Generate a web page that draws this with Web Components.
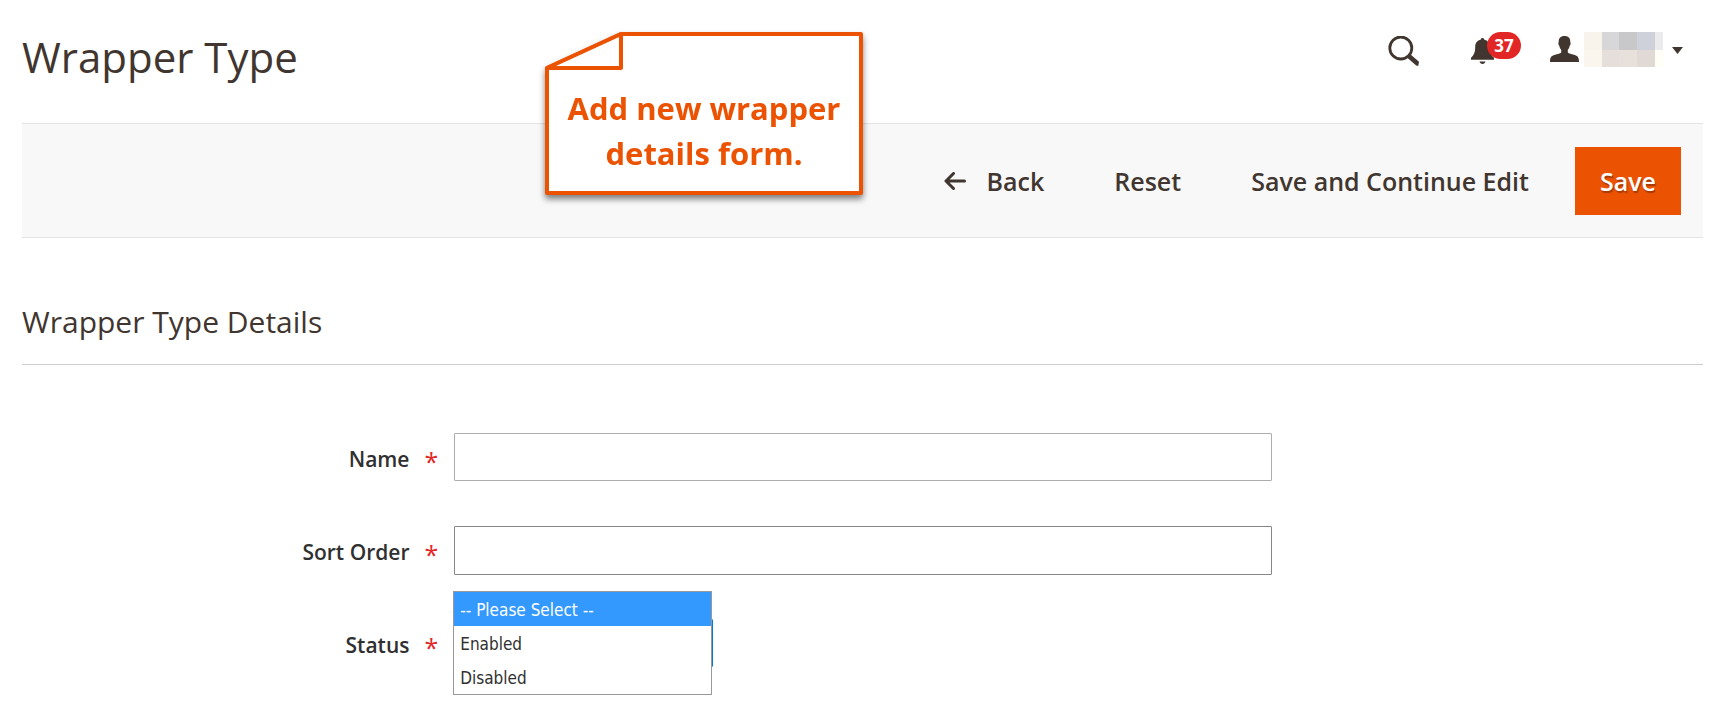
<!DOCTYPE html>
<html lang="en">
<head>
<meta charset="utf-8">
<meta name="viewport" content="width=device-width, initial-scale=1">
<title>Wrapper Type</title>
<style>
  body { margin: 0; background: #fff; color: #41362f; font-family: "Open Sans", "Noto Sans", sans-serif; }
</style>
</head>
<body>
<wrapper-page></wrapper-page>

<template id="page-header">
  <style>
    :host { display: flex; justify-content: space-between; align-items: flex-start; height: 123px; }
    h1 { margin: 29px 0 0; font-size: 42px; line-height: 56px; font-weight: 400; white-space: nowrap; }
  </style>
  <h1><slot></slot></h1>
  <slot name="tools"></slot>
</template>

<template id="header-tools">
  <style>
    :host { display: flex; align-items: flex-start; padding: 32px 20px 0 0; }
    button { display: flex; align-items: flex-start; padding: 0; border: 0; background: none; color: inherit; font: inherit; cursor: pointer; }
    svg { display: block; fill: currentColor; }
    .search { padding-top: 4px; }
    .bell { position: relative; width: 50px; margin: 0 29px 0 52px; padding-top: 6px; }
    .count { position: absolute; top: 0; right: 0; width: 34px; height: 27px; border-radius: 14px; background: #e22626; color: #fff; font-size: 17px; line-height: 27px; font-weight: 700; text-align: center; }
    .person { margin: 4px 5px 0 0; }
    .caret { margin: 15px 0 0 9px; }
  </style>
  <button class="search" type="button" aria-label="Search">
    <svg width="31" height="30" viewBox="0 0 31 30"><circle cx="12.8" cy="12" r="11" fill="none" stroke="currentColor" stroke-width="2.800"/><path d="M22.300 18.200 31 25.800 30.200 30 28.200 29.600 19 21.600Z"/></svg>
  </button>
  <button class="bell" type="button" aria-label="Notifications">
    <svg width="23" height="27" viewBox="0 0 23 27"><path d="M11.500 0c.9 0 1.500.6 1.600 1.400 3.600.8 5.700 3.600 5.700 7.300 0 5.600 1.300 8.100 4.200 11.100v2H0v-2c2.900-3 4.200-5.500 4.200-11.100 0-3.700 2.100-6.500 5.700-7.300C10 .6 10.600 0 11.500 0ZM8.500 23.600h6c-.3 1.500-1.500 2.300-3 2.300s-2.700-.8-3-2.300Z"/></svg>
    <span class="count">37</span>
  </button>
  <button type="button" aria-label="Account">
    <svg class="person" width="29" height="26" viewBox="0 0 29 26"><path d="M14.500 0c4.200 0 6 2.400 5.800 6.300.7 1 .3 2.700-.6 3.400-.3 1.900-1 3.200-1.900 4.100v2.600c1 1.200 3.400 1.300 6.200 2.300 3.900 1.300 5 2.500 5 7.300H0c0-4.800 1.100-6 5-7.300 2.800-1 5.200-1.100 6.200-2.300v-2.600c-.9-.9-1.600-2.200-1.900-4.100-.9-.7-1.300-2.400-.6-3.400C8.500 2.400 10.300 0 14.500 0Z"/></svg>
    <svg width="79" height="35" viewBox="0 0 79 35" shape-rendering="crispEdges"><path fill="#f8f3eb" d="M0 0h18v18H0z"/><path fill="#d7d6d9" d="M18 0h17v18H18z"/><path fill="#c8c8ca" d="M35 0h18v18H35z"/><path fill="#cfd1da" d="M53 0h18v18H53z"/><path fill="#ebebee" d="M71 0h8v18h-8z"/><path fill="#faf6ee" d="M0 18h18v17H0z"/><path fill="#e6deda" d="M18 18h17v17H18z"/><path fill="#e7e0db" d="M35 18h18v17H35z"/><path fill="#e1d9d5" d="M53 18h18v17H53z"/><path fill="#fffff8" d="M71 18h8v17h-8z"/></svg>
    <svg class="caret" width="11" height="7" viewBox="0 0 11 7"><path d="M0 0h11L5.500 7Z"/></svg>
  </button>
</template>

<template id="action-bar">
  <style>
    :host { display: flex; justify-content: flex-end; gap: 22px; padding: 23px 22px 22px; border: solid #e3e3e3; border-width: 1px 0; background: #f8f8f8; }
  </style>
  <slot></slot>
</template>

<template id="action-button">
  <style>
    :host { display: block; }
    button { display: flex; align-items: center; gap: 21px; height: 68px; padding: 0 24px; border: 0; background: none; color: inherit; font: 600 25px/34px "Open Sans", "Noto Sans", sans-serif; white-space: nowrap; cursor: pointer; }
    :host([primary]) button { padding: 0 25px; background: #eb5202; color: #fff; text-shadow: 1px 2px 1px rgba(0, 0, 0, .3); }
  </style>
  <button type="button"><slot name="icon"></slot><slot></slot></button>
</template>

<template id="form-section">
  <style>
    :host { display: block; padding-top: 63px; }
    h2 { margin: 0 0 68px; padding-bottom: 22px; border-bottom: 1px solid #ccc; font-size: 30px; line-height: 41px; font-weight: 400; }
    form { display: grid; gap: 41px; }
  </style>
  <h2><slot name="title"></slot></h2>
  <form><slot></slot></form>
</template>

<template id="form-field">
  <style>
    :host { display: grid; grid-template-columns: calc(25% + 12px) calc(50% - 23px); align-items: start; color: #303030; }
    label { display: flex; justify-content: flex-end; gap: 15px; padding-right: 16px; font-size: 21px; line-height: 52px; font-weight: 600; white-space: nowrap; }
    .mark { color: #e22626; font-size: 25px; line-height: 56px; height: 52px; font-weight: 400; }
    .control { position: relative; }
    input, select { display: block; box-sizing: border-box; height: 48px; border: 1px solid #adadad; border-radius: 1px; background: #fff; color: #303030; font: 20px "Open Sans", sans-serif; padding: 0 14px; }
    input { width: 100%; }
    :host([active]) input { border-color: #878787; height: 49px; }
    select { width: 259px; border-color: #007bdb; }
    ul { position: absolute; top: -28px; left: -1px; box-sizing: border-box; width: 259px; margin: 0; padding: 0; border: 1px solid #999; background: #fff; list-style: none; font: 17px/32px "DejaVu Sans Condensed", "Noto Sans", sans-serif; }
    li { padding: 2px 6px 0; }
    [aria-selected=true] { background: #3399ff; color: #fff; }
  </style>
  <label for="control"><span class="text"></span><span class="mark">*</span></label>
  <div class="control"></div>
</template>

<template id="callout-note">
  <style>
    :host { display: grid; width: 318px; height: 164px; color: #eb5202; filter: drop-shadow(0 4px 3px rgba(0, 0, 0, .5)); }
    svg, p { grid-area: 1 / 1; }
    p { margin: 54px 0 0; text-align: center; font-size: 31px; line-height: 45px; font-weight: 700; }
  </style>
  <svg width="318" height="164" viewBox="0 0 318 164" fill="#fff" stroke="#eb5202" stroke-width="4" stroke-linejoin="round"><path d="M2 36 76 2H316V161H2Z"/><path d="M2 36 76 2V36Z"/></svg>
  <p><slot></slot></p>
</template>

<template id="wrapper-page">
  <style>
    :host { display: block; position: relative; padding-bottom: 49px; }
    main, page-header { margin: 0 23px 0 22px; }
    callout-note { position: absolute; top: 32px; right: 50%; }
  </style>
  <page-header>Wrapper Type<header-tools slot="tools"></header-tools></page-header>
  <main>
    <action-bar>
      <action-button><svg slot="icon" width="22" height="18" viewBox="0 0 22 18" fill="none" stroke="currentColor" stroke-width="3" stroke-linecap="round" stroke-linejoin="round"><path d="M20.500 9H2M9.500 1.500 2 9l7.500 7.500"/></svg>Back</action-button>
      <action-button>Reset</action-button>
      <action-button>Save and Continue Edit</action-button>
      <action-button primary>Save</action-button>
    </action-bar>
    <form-section>
      <span slot="title">Wrapper Type Details</span>
      <form-field label="Name"></form-field>
      <form-field label="Sort Order" active></form-field>
      <form-field label="Status" options="-- Please Select --|Enabled|Disabled"></form-field>
    </form-section>
  </main>
  <callout-note>Add new wrapper<br>details form.</callout-note>
</template>

<script>
  class TemplateElement extends HTMLElement {
    constructor() {
      super();
      const template = document.getElementById(this.localName);
      this.attachShadow({ mode: 'open' }).append(template.content.cloneNode(true));
    }
  }

  class FormField extends TemplateElement {
    connectedCallback() {
      const box = this.shadowRoot.querySelector('.control');
      if (box.firstChild) return;
      this.shadowRoot.querySelector('.text').textContent = this.getAttribute('label');
      const options = this.getAttribute('options');
      const control = document.createElement(options ? 'select' : 'input');
      control.id = 'control';
      control.required = true;
      box.append(control);
      if (!options) return;
      const list = document.createElement('ul');
      list.setAttribute('role', 'listbox');
      options.split('|').forEach((text, index) => {
        control.add(new Option(text));
        const item = document.createElement('li');
        item.setAttribute('role', 'option');
        item.setAttribute('aria-selected', index === 0);
        item.textContent = text;
        item.addEventListener('click', () => {
          control.selectedIndex = index;
          [...list.children].forEach(other => other.setAttribute('aria-selected', other === item));
        });
        list.append(item);
      });
      box.append(list);
    }
  }

  customElements.define('form-field', FormField);
  for (const name of ['header-tools', 'page-header', 'action-button', 'action-bar', 'form-section', 'callout-note', 'wrapper-page']) {
    customElements.define(name, class extends TemplateElement {});
  }
</script>
</body>
</html>
